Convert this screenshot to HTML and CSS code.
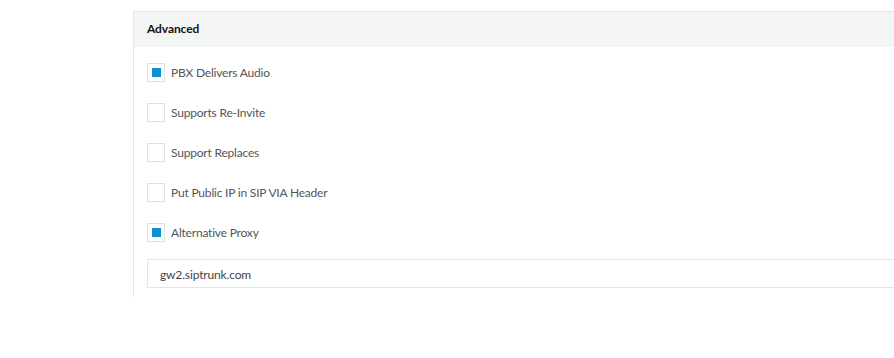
FILE: index.html
```html
<!DOCTYPE html>
<html>
<head>
<meta charset="utf-8">
<link rel="stylesheet" href="styles.css">
</head>
<body>
<div class="page">
  <section class="panel">
    <header class="panel-head">Advanced</header>
    <div class="panel-body">
      <label class="check"><span class="box on"></span><span class="txt">PBX Delivers Audio</span></label>
      <label class="check"><span class="box"></span><span class="txt">Supports Re-Invite</span></label>
      <label class="check"><span class="box"></span><span class="txt">Support Replaces</span></label>
      <label class="check"><span class="box"></span><span class="txt">Put Public IP in SIP VIA Header</span></label>
      <label class="check"><span class="box on"></span><span class="txt">Alternative Proxy</span></label>
      <div class="input">gw2.siptrunk.com</div>
    </div>
  </section>
</div>
</body>
</html>
```
FILE: styles.css
```css
html, body {
  margin: 0;
  padding: 0;
  background: #fff;
  overflow: hidden;
}
body {
  font-family: Lato, "Noto Sans", sans-serif;
  width: 894px;
  height: 358px;
}
.page {
  padding-top: 11px;
  padding-left: 133px;
}
.panel {
  border-top: 1px solid #e4e7e7;
  border-left: 1px solid #e4e7e7;
  overflow: hidden;
}
.panel-head {
  background: #f4f5f5;
  height: 35px;
  box-sizing: border-box;
  padding-left: 13px;
  padding-bottom: 2px;
  display: flex;
  align-items: center;
  font-weight: 700;
  font-size: 12px;
  letter-spacing: -0.1px;
  color: #111;
}
.panel-body {
  padding: 16px 0 9px 13px;
  display: flex;
  flex-direction: column;
}
.check {
  display: flex;
  align-items: center;
  height: 19px;
  margin-bottom: 21px;
}
.check:nth-child(5) {
  margin-bottom: 17px;
}
.box {
  width: 18px;
  height: 19px;
  box-sizing: border-box;
  border: 1px solid #dde1e1;
  display: flex;
  align-items: center;
  justify-content: center;
  background: #fff;
  flex: none;
}
.box.on::after {
  content: "";
  width: 9px;
  height: 9px;
  background: #0b90d3;
}
.txt {
  margin-left: 6px;
  font-size: 12px;
  letter-spacing: -0.2px;
  color: #555;
}
.input {
  height: 29px;
  box-sizing: border-box;
  border: 1px solid #e2e6e6;
  border-right: none;
  padding-left: 12px;
  padding-top: 1px;
  display: flex;
  align-items: center;
  font-size: 12px;
  letter-spacing: -0.15px;
  color: #444;
}
```
